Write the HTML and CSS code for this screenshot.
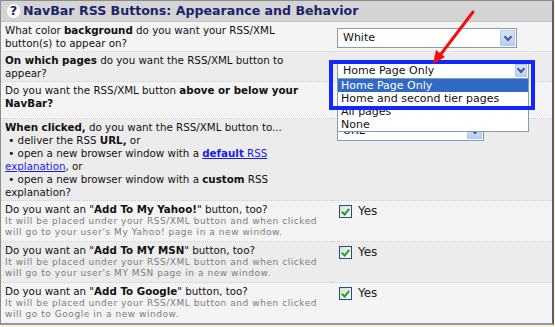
FILE: index.html
```html
<!DOCTYPE html>
<html lang="en">
<head>
    <meta charset="UTF-8">
    <title>NavBar RSS Buttons</title>
    <link rel="stylesheet" href="styles.css">
</head>
<body>
    <div class="panel">
        <div class="panel-head"><span class="help">?</span>NavBar RSS Buttons: Appearance and Behavior</div>
        <table class="options">
            <tr>
                <td class="question">What color <b>background</b> do you want your RSS/XML<br>button(s) to appear on?</td>
                <td class="answer">
                    <div class="select select-color"><span>White</span><i class="arrow"></i></div>
                </td>
            </tr>
            <tr class="shade">
                <td class="question"><b>On which pages</b> do you want the RSS/XML button to<br>appear?</td>
                <td class="answer">
                    <div class="select select-pages"><span>Home Page Only</span><i class="arrow"></i>
                        <ul class="dropdown">
                            <li class="picked">Home Page Only</li>
                            <li>Home and second tier pages</li>
                            <li>All pages</li>
                            <li>None</li>
                        </ul>
                    </div>
                </td>
            </tr>
            <tr>
                <td class="question">Do you want the RSS/XML button <b>above or below your<br>NavBar?</b></td>
                <td class="answer">
                    <div class="select select-place"><span>Above</span><i class="arrow"></i></div>
                </td>
            </tr>
            <tr class="shade">
                <td class="question">
                    <b>When clicked,</b> do you want the RSS/XML button to...<br>
                    &nbsp;&bull; deliver the RSS <b>URL,</b> or<br>
                    &nbsp;&bull; open a new browser window with a <a href="#"><b>default</b> RSS<br>explanation</a>, or<br>
                    &nbsp;&bull; open a new browser window with a <b>custom</b> RSS<br>explanation?
                </td>
                <td class="answer">
                    <div class="select select-click"><span>URL</span><i class="arrow"></i></div>
                </td>
            </tr>
            <tr class="extra">
                <td class="question">Do you want an "<b>Add To My Yahoo!</b>" button, too?
                    <div class="note">It will be placed under your RSS/XML button and when clicked<br>will go to your user's My Yahoo! page in a new window.</div>
                </td>
                <td class="answer"><label class="check"><i class="box"></i>Yes</label></td>
            </tr>
            <tr class="extra shade">
                <td class="question">Do you want an "<b>Add To MY MSN</b>" button, too?
                    <div class="note">It will be placed under your RSS/XML button and when clicked<br>will go to your user's MY MSN page in a new window.</div>
                </td>
                <td class="answer"><label class="check"><i class="box"></i>Yes</label></td>
            </tr>
            <tr class="extra">
                <td class="question">Do you want an "<b>Add To Google</b>" button, too?
                    <div class="note">It will be placed under your RSS/XML button and when clicked<br>will go to Google in a new window.</div>
                </td>
                <td class="answer"><label class="check"><i class="box"></i>Yes</label></td>
            </tr>
        </table>

        <div class="callout"></div>
        <svg class="pointer" width="70" height="70" viewBox="420 0 70 70">
            <line x1="473" y1="12" x2="441" y2="54" stroke="#f01010" stroke-width="3" stroke-linecap="round"/>
            <polygon points="433,64 445,57 436,50" fill="#f01010"/>
        </svg>
    </div>
</body>
</html>
```

FILE: styles.css
```css
body {
    margin: 0;
    background-color: #fbf4d0;
    font-family: "DejaVu Sans", Verdana, sans-serif;
    font-size: 10.3px;
    color: #111;
}
.panel {
    position: relative;
    width: 554px;
    box-sizing: border-box;
    background-color: #f4f4f4;
    border: 1px solid #8c8c8c;
    border-right: 2px solid #5c5c70;
    border-bottom: 2px solid #9494ac;
}
.panel-head {
    height: 20px;
    line-height: 20px;
    padding-left: 6px;
    background-color: #d4d4d4;
    border-bottom: 1px solid #c6c6c6;
    font-size: 12.6px;
    font-weight: bold;
    color: #1c246c;
}
.help {
    display: inline-block;
    width: 13px;
    height: 14px;
    line-height: 14px;
    margin-right: 3px;
    border-radius: 7px;
    background-color: #fff;
    text-align: center;
    font-size: 13px;
}
.options {
    width: 100%;
    border-collapse: collapse;
}
.options td {
    padding: 2px 4px 1px;
    vertical-align: top;
    line-height: 13px;
}
.options tr + tr td {
    border-top: 1px dotted #d0d0d0;
}
.options tr.shade td {
    background-color: #ececec;
}
.options tr.extra td {
    padding-bottom: 4px;
}
.question {
    width: 323px;
}
.question a {
    color: #1a1aee;
}
.note {
    font-size: 9px;
    line-height: 10.5px;
    letter-spacing: 0.55px;
    color: #7c7c7c;
}
.select {
    position: relative;
    box-sizing: border-box;
    height: 20px;
    margin: 4px 0 0 1px;
    padding-left: 5px;
    border: 1px solid #7f9db9;
    background-color: #fff;
    line-height: 18px;
    font-size: 11px;
    color: #111;
}
.select .arrow {
    position: absolute;
    top: 1px;
    right: 1px;
    width: 15px;
    height: 16px;
    box-sizing: border-box;
    border: 1px solid #b6c8ef;
    background: linear-gradient(#d6e2fb, #b9cdf6);
}
.select .arrow::after {
    content: "";
    position: absolute;
    left: 4px;
    top: 3px;
    width: 4px;
    height: 4px;
    border-right: 2px solid #4a5c86;
    border-bottom: 2px solid #4a5c86;
    transform: rotate(45deg);
}
.select-color {
    width: 180px;
}
.select-pages {
    width: 192px;
    height: 17px;
    margin-top: 8px;
    line-height: 15px;
    z-index: 2;
}
.select-pages .arrow {
    height: 13px;
    width: 12px;
}
.select-pages .arrow::after {
    left: 2px;
    top: 1px;
}
.select-place {
    width: 160px;
    margin-top: 8px;
    margin-bottom: 5px;
}
.select-click {
    width: 147px;
    margin-top: 0;
}
.dropdown {
    position: absolute;
    left: -1px;
    top: 15px;
    width: 192px;
    box-sizing: border-box;
    margin: 0;
    padding: 0;
    list-style: none;
    background-color: #fff;
    border: 1px solid #7f9db9;
}
.dropdown li {
    height: 13px;
    line-height: 13px;
    padding-left: 3px;
}
.dropdown li.picked {
    background-color: #316ac5;
    color: #fff;
}
.check {
    display: flex;
    align-items: center;
    gap: 6px;
    margin: 2px 0 0 3px;
    font-size: 12px;
    color: #222;
}
.box {
    display: block;
    width: 13px;
    height: 13px;
    box-sizing: border-box;
    border: 1px solid #1c5180;
    background: linear-gradient(135deg, #dcdcd6, #fff);
    position: relative;
}
.box::after {
    content: "";
    position: absolute;
    left: 3px;
    top: 1px;
    width: 3px;
    height: 6px;
    border-right: 2px solid #21a121;
    border-bottom: 2px solid #21a121;
    transform: rotate(40deg);
}
.callout {
    position: absolute;
    left: 328px;
    top: 59px;
    width: 206px;
    height: 50px;
    box-sizing: border-box;
    border: 4px solid #1426ff;
    z-index: 3;
}
.pointer {
    position: absolute;
    left: 419px;
    top: -1px;
    z-index: 4;
}
```
